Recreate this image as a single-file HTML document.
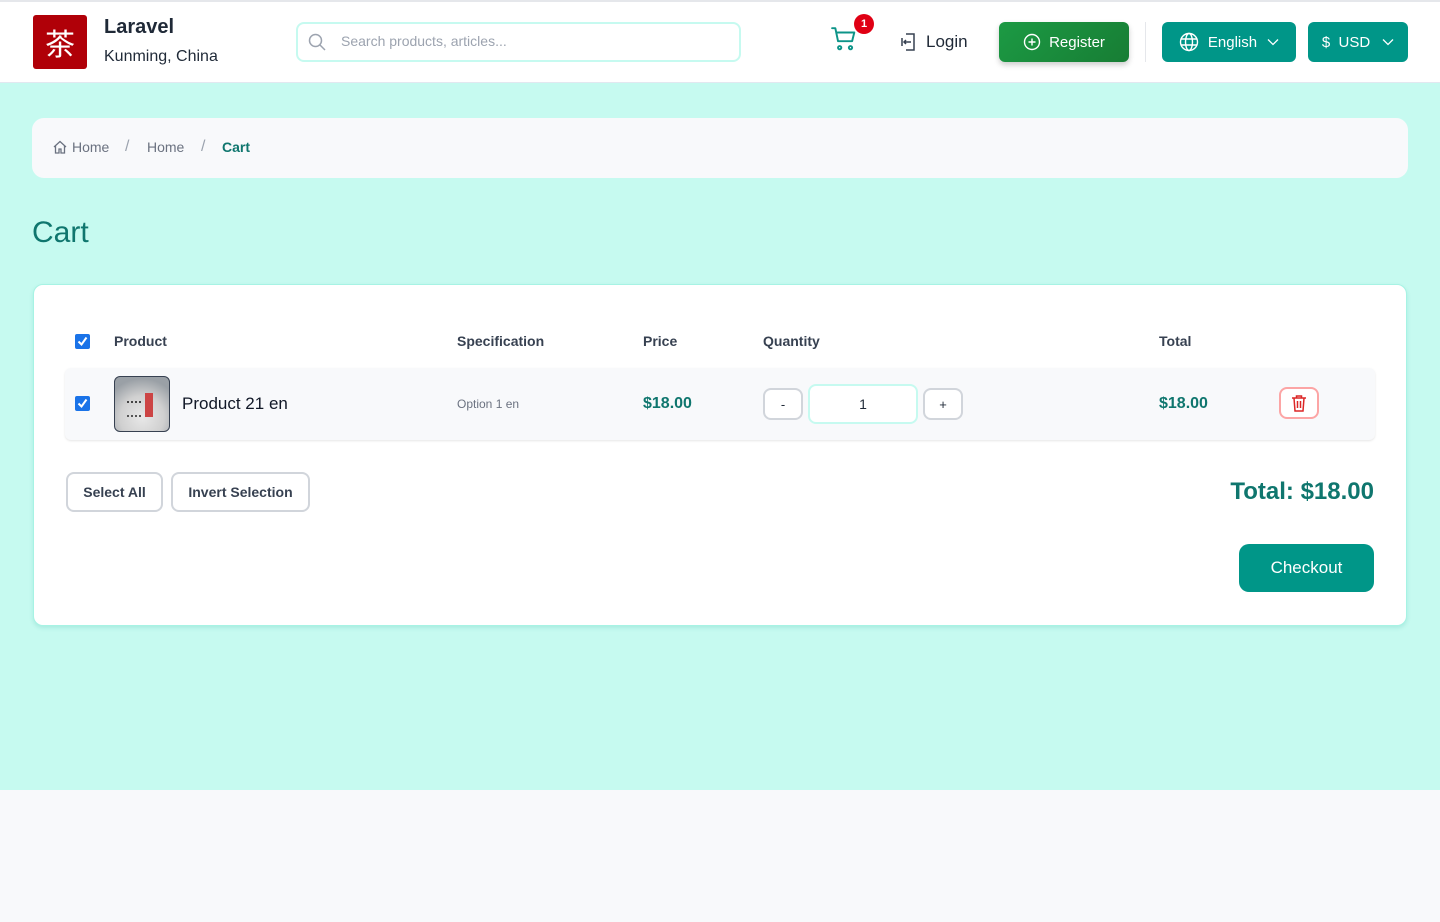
<!DOCTYPE html>
<html><head><meta charset="utf-8"><style>
*{box-sizing:border-box;margin:0;padding:0}
body{width:1440px;height:922px;background:#f8f9fb;font-family:"Liberation Sans","Noto Sans CJK SC",sans-serif;position:relative;overflow:hidden;color:#1f2937}
.abs{position:absolute}
header{position:absolute;left:0;top:0;width:1440px;height:83px;background:#fff;border-top:2px solid #e5e7eb;border-bottom:1px solid #e2e8f0;box-shadow:0 1px 3px rgba(0,0,0,.08)}
.main{position:absolute;left:0;top:83px;width:1440px;height:707px;background:#c6faf0}
.btn{position:absolute;display:flex;align-items:center;justify-content:center;border-radius:6px;color:#fff;font-size:15px}
.th{position:absolute;top:333px;font-size:14px;font-weight:bold;color:#374151}
.cb{position:absolute;width:15px;height:15px;background:#1a73e8;border-radius:2px}
.cb svg{position:absolute;left:2px;top:2px}
.sm{position:absolute;background:#fff;border:2px solid #d1d5db;border-radius:8px;display:flex;align-items:center;justify-content:center;font-size:13px;color:#1f2937}
</style></head><body>
<header>
 <div class="abs" style="left:33px;top:13px;width:54px;height:54px;background:#b00008;border-radius:3px;color:#fff;font-size:30px;display:flex;align-items:center;justify-content:center;font-family:'Noto Sans CJK SC',sans-serif">茶</div>
 <div class="abs" style="left:104px;top:14px;font-size:20px;font-weight:bold;color:#1f2937">Laravel</div>
 <div class="abs" style="left:104px;top:46px;font-size:16px;color:#1f2937">Kunming, China</div>
 <div class="abs" style="left:296px;top:20px;width:445px;height:40px;border:2px solid #c6faf0;border-radius:8px;background:#fff"></div>
 <svg class="abs" style="left:307px;top:30px" width="20" height="20" viewBox="0 0 20 20" fill="none" stroke="#9ca3af" stroke-width="1.5"><circle cx="8.5" cy="8.5" r="6"/><path d="M13 13l5 5"/></svg>
 <div class="abs" style="left:341px;top:31px;font-size:14px;color:#9ca3af">Search products, articles...</div>
 <svg class="abs" style="left:831px;top:24px" width="26" height="26" viewBox="0 0 24 24" fill="none" stroke="#0d9488" stroke-width="1.8" stroke-linecap="round" stroke-linejoin="round"><path d="M1 2h3l2.5 12h13l2-8H6"/><circle cx="8" cy="20" r="1.5"/><circle cx="18" cy="20" r="1.5"/></svg>
 <div class="abs" style="left:854px;top:12px;width:20px;height:20px;border-radius:50%;background:#e00014;color:#fff;font-size:11px;font-weight:bold;display:flex;align-items:center;justify-content:center">1</div>
 <svg class="abs" style="left:899px;top:30px" width="18" height="20" viewBox="0 0 18 20" fill="none" stroke="#374151" stroke-width="1.5"><path d="M7 2h8v16H7M3 6v8M12 10H5M7 8l-2 2 2 2"/></svg>
 <div class="abs" style="left:926px;top:30px;font-size:17px;color:#1f2937">Login</div>
 <div class="btn" style="left:999px;top:20px;width:130px;height:40px;background:linear-gradient(135deg,#1c9a44,#177d34);box-shadow:0 3px 6px rgba(0,0,0,.2)"><svg width="18" height="18" viewBox="0 0 18 18" fill="none" stroke="#fff" stroke-width="1.4" style="margin-right:8px"><circle cx="9" cy="9" r="7.5"/><path d="M9 5.5v7M5.5 9h7"/></svg>Register</div>
 <div class="abs" style="left:1145px;top:20px;width:1px;height:40px;background:#e5e7eb"></div>
 <div class="btn" style="left:1162px;top:20px;width:134px;height:40px;background:#009688"><svg width="20" height="20" viewBox="0 0 20 20" fill="none" stroke="#fff" stroke-width="1.4" style="margin-right:9px"><circle cx="10" cy="10" r="8.5"/><ellipse cx="10" cy="10" rx="3.5" ry="8.5"/><path d="M2 7h16M2 13h16"/></svg>English<svg width="12" height="8" viewBox="0 0 12 8" fill="none" stroke="#fff" stroke-width="1.3" style="margin-left:10px"><path d="M1 1.5l5 5 5-5"/></svg></div>
 <div class="btn" style="left:1308px;top:20px;width:100px;height:40px;background:#009688">$&nbsp;&nbsp;USD<svg width="12" height="8" viewBox="0 0 12 8" fill="none" stroke="#fff" stroke-width="1.3" style="margin-left:12px"><path d="M1 1.5l5 5 5-5"/></svg></div>
</header>
<div class="main"></div>
<div class="abs" style="left:32px;top:118px;width:1376px;height:60px;background:#f8f9fb;border-radius:12px"></div>
<svg class="abs" style="left:53px;top:140px" width="14" height="14" viewBox="0 0 14 14" fill="none" stroke="#6b7280" stroke-width="1.3"><path d="M1 7L7 1.5 13 7M2.5 5.5V13h3.5V9h2v4h3.5V5.5"/></svg>
<div class="abs" style="left:72px;top:139px;font-size:14px;color:#6b7280">Home</div>
<div class="abs" style="left:125px;top:138px;font-size:16px;color:#9ca3af">/</div>
<div class="abs" style="left:147px;top:139px;font-size:14px;color:#6b7280">Home</div>
<div class="abs" style="left:201px;top:138px;font-size:16px;color:#9ca3af">/</div>
<div class="abs" style="left:222px;top:139px;font-size:14px;font-weight:bold;color:#0f766e">Cart</div>
<div class="abs" style="left:32px;top:216px;font-size:30px;color:#0f766e">Cart</div>
<div class="abs" style="left:33px;top:284px;width:1374px;height:342px;background:#fff;border-radius:10px;border:1px solid #a7f3e4;box-shadow:0 2px 4px rgba(0,150,136,.15)"></div>
<div class="cb" style="left:75px;top:334px"><svg width="11" height="11" viewBox="0 0 11 11" fill="none" stroke="#fff" stroke-width="2"><path d="M1.5 5.5l3 3 5-7"/></svg></div>
<div class="th" style="left:114px">Product</div>
<div class="th" style="left:457px">Specification</div>
<div class="th" style="left:643px">Price</div>
<div class="th" style="left:763px">Quantity</div>
<div class="th" style="left:1159px">Total</div>
<div class="abs" style="left:65px;top:368px;width:1310px;height:72px;background:#f8f9fb;border-radius:6px;box-shadow:0 1px 2px rgba(0,0,0,.1)"></div>
<div class="cb" style="left:75px;top:396px"><svg width="11" height="11" viewBox="0 0 11 11" fill="none" stroke="#fff" stroke-width="2"><path d="M1.5 5.5l3 3 5-7"/></svg></div>
<div class="abs" style="left:114px;top:376px;width:56px;height:56px;border-radius:6px;border:1px solid #374151;background:radial-gradient(circle at 50% 75%,#e8e8e8 0,#d0d0d0 45%,#9aa0a6 80%);overflow:hidden"><div style="position:absolute;left:30px;top:16px;width:8px;height:24px;background:#c44"></div><div style="position:absolute;left:12px;top:24px;width:14px;height:16px;border-top:2px dotted #444;border-bottom:2px dotted #555"></div></div>
<div class="abs" style="left:182px;top:394px;font-size:17px;color:#111827">Product 21 en</div>
<div class="abs" style="left:457px;top:397px;font-size:12px;color:#6b7280">Option 1 en</div>
<div class="abs" style="left:643px;top:395px;font-size:16px;font-weight:bold;color:#0f766e">$18.00</div>
<div class="sm" style="left:763px;top:388px;width:40px;height:32px">-</div>
<div class="abs" style="left:808px;top:384px;width:110px;height:40px;background:#fff;border:2px solid #c6faf0;border-radius:8px;display:flex;align-items:center;justify-content:center;font-size:14px">1</div>
<div class="sm" style="left:923px;top:388px;width:40px;height:32px">+</div>
<div class="abs" style="left:1159px;top:395px;font-size:16px;font-weight:bold;color:#0f766e">$18.00</div>
<div class="abs" style="left:1279px;top:387px;width:40px;height:32px;background:#fff;border:2px solid #fca5a5;border-radius:8px"></div>
<svg class="abs" style="left:1290px;top:394px" width="18" height="19" viewBox="0 0 18 19" fill="none" stroke="#dc2626" stroke-width="1.5"><path d="M2 4h14M6.5 4V2h5v2M4 4l1 13h8l1-13M7.5 7v7M10.5 7v7"/></svg>
<div class="sm" style="left:66px;top:472px;width:97px;height:40px;font-size:14px;font-weight:bold;color:#374151">Select All</div>
<div class="sm" style="left:171px;top:472px;width:139px;height:40px;font-size:14px;font-weight:bold;color:#374151">Invert Selection</div>
<div class="abs" style="left:1100px;top:478px;width:274px;text-align:right;font-size:24px;font-weight:bold;color:#0f766e">Total: $18.00</div>
<div class="btn" style="left:1239px;top:544px;width:135px;height:48px;background:#009688;border-radius:10px;font-size:17px">Checkout</div>
</body></html>
